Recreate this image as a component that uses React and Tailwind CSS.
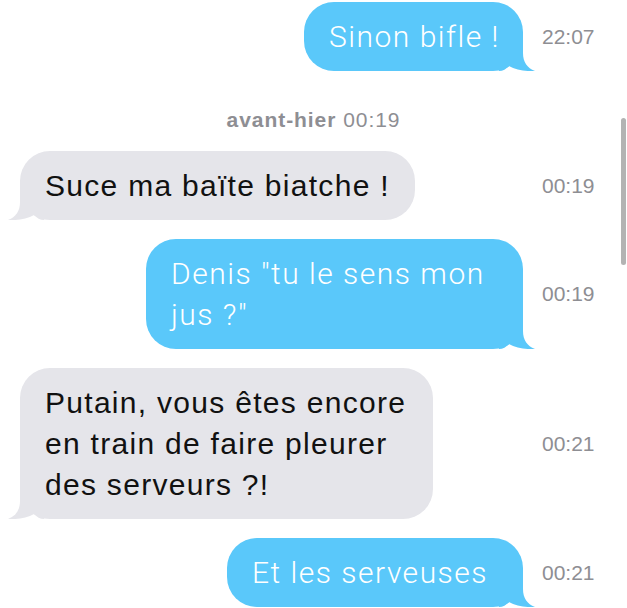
import React from "react";

function Tail({ side, color }) {
  const pos = side === "right" ? "-right-[12px]" : "-left-[12px] -scale-x-100";
  return (
    <svg
      className={`absolute bottom-0 ${pos} w-[36px] h-[30px]`}
      viewBox="0 0 36 30"
      fill={color}
    >
      <path d="M0,0 L24,0 L24,12 C24,21 28,27 36,30 C29,30.5 17,29.5 10,25 C7,28 4,30 0,30 Z" />
    </svg>
  );
}

function Row({ out, time, w, children }) {
  return (
    <div className="flex items-center">
      <div
        className={`flex w-[542px] ${
          out ? "justify-end pr-[19px]" : "justify-start pl-[20px]"
        }`}
      >
        <div
          className={`relative rounded-[30px] pl-[25px] py-[14px] text-[30px] leading-[41px] whitespace-nowrap ${
            out
              ? "bg-[#5ac8fa] text-white font-light tracking-[0.05em] font-['Roboto',sans-serif]"
              : "bg-[#e5e5ea] text-[#111] tracking-[0.043em] font-['Liberation_Sans',Arial,sans-serif]"
          }`}
          style={{ width: w }}
        >
          <Tail side={out ? "right" : "left"} color={out ? "#5ac8fa" : "#e5e5ea"} />
          <div className="relative">{children}</div>
        </div>
      </div>
      <div className="text-[21px] leading-[24px] text-[#8e8e93] font-['Liberation_Sans',Arial,sans-serif]">
        {time}
      </div>
    </div>
  );
}

export default function App() {
  return (
    <div className="relative w-[627px] h-[608px] bg-white overflow-hidden pt-[2px] flex flex-col gap-[19px]">
      <Row out time="22:07" w={219}>
        Sinon bifle !
      </Row>
      <div className="mt-[18px] text-center text-[21px] leading-[24px] tracking-[0.045em] text-[#8e8e93] font-['Liberation_Sans',Arial,sans-serif]">
        <span className="font-bold">avant-hier</span> 00:19
      </div>
      <Row time="00:19" w={395}>
        Suce ma baïte biatche !
      </Row>
      <Row out time="00:19" w={377}>
        Denis "tu le sens mon
        <br />
        jus ?"
      </Row>
      <Row time="00:21" w={413}>
        Putain, vous êtes encore
        <br />
        en train de faire pleurer
        <br />
        des serveurs ?!
      </Row>
      <Row out time="00:21" w={296}>
        Et les serveuses
      </Row>
      <div className="absolute right-[1px] top-[118px] w-[5px] h-[147px] rounded-full bg-[#b3b3b3]" />
    </div>
  );
}
